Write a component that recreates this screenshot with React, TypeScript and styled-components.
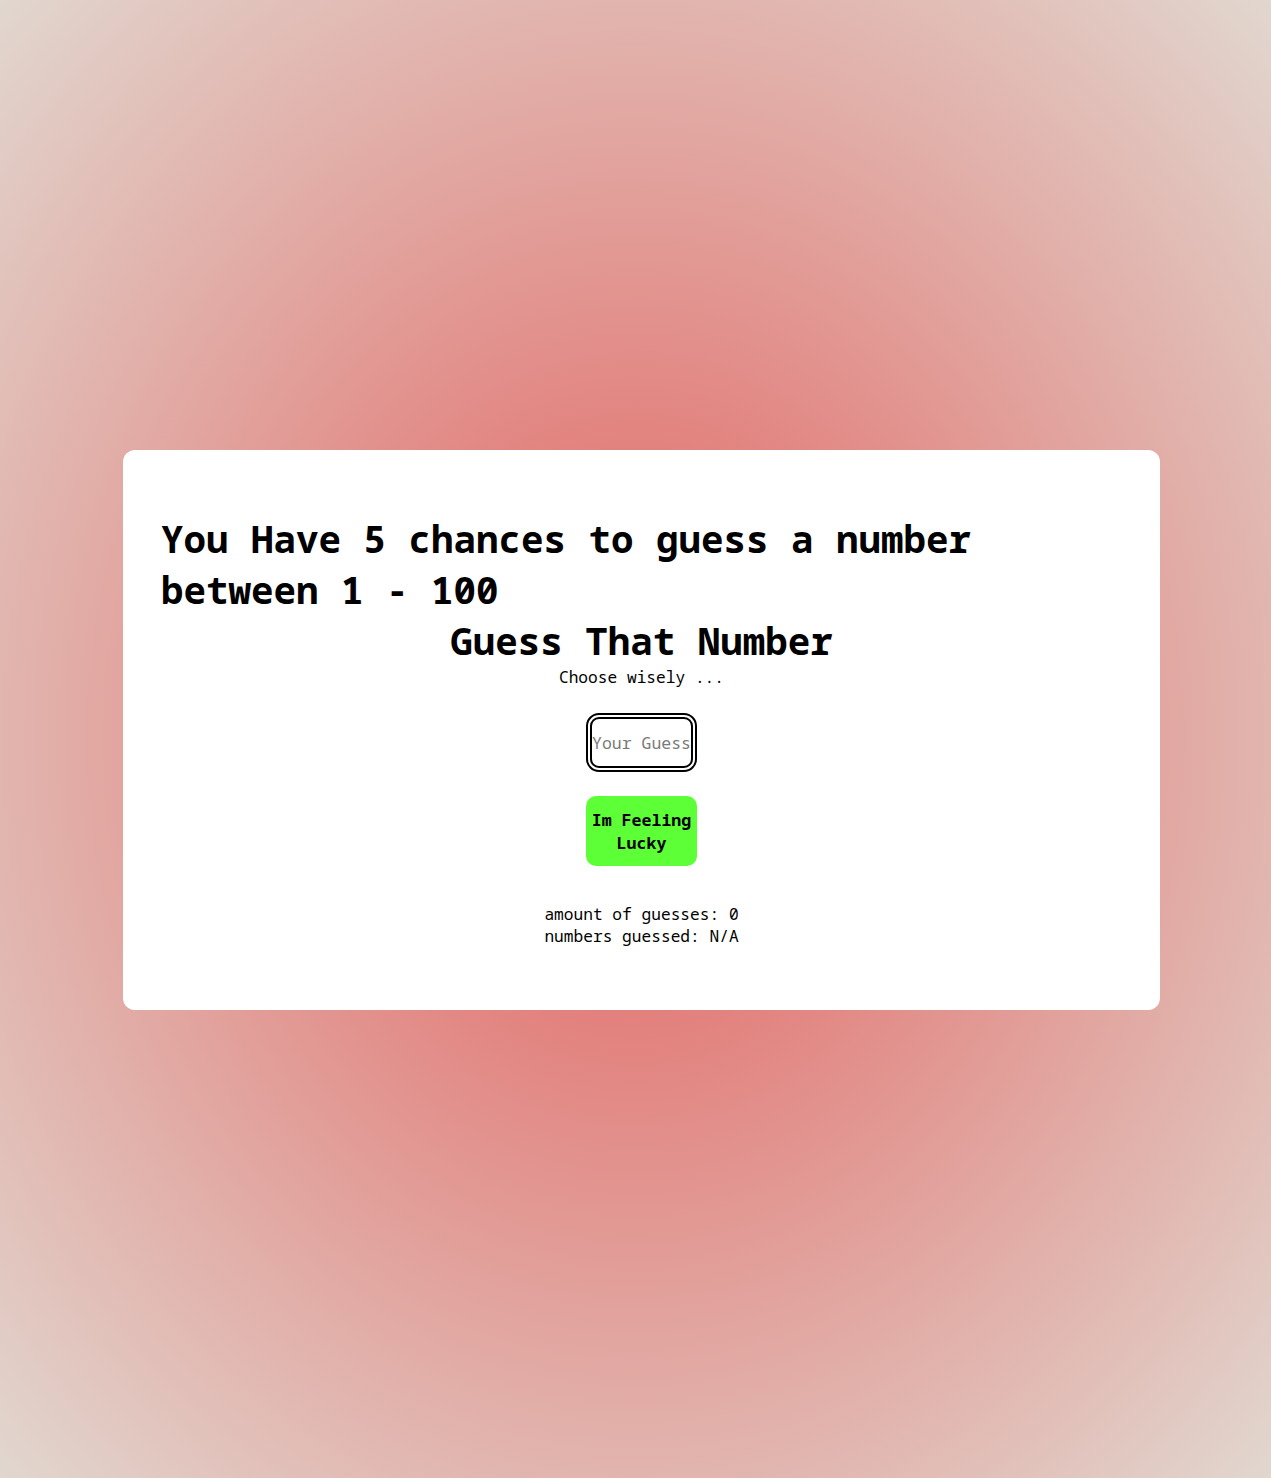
import React from "react";
import styled, { createGlobalStyle } from "styled-components";

const Global = createGlobalStyle`
  html, body { margin: 0; padding: 0; }
  body {
    min-height: 1478px;
    font-family: "Noto Sans Mono", "DejaVu Sans Mono", monospace;
    background: radial-gradient(ellipse farthest-corner at 50% 50%, rgb(227, 98, 96) 0%, rgb(225, 215, 207) 100%);
    background-attachment: fixed;
  }
`;

const Page = styled.main`
  box-sizing: border-box;
  min-height: 1478px;
  padding: 450px 111px 0 123px;
`;

const Card = styled.section`
  box-sizing: border-box;
  width: 1037px;
  height: 560px;
  background: #ffffff;
  border-radius: 12px;
  padding: 63px 38px 0 38px;
  display: flex;
  flex-direction: column;
  align-items: center;
  color: #000;
`;

const Title = styled.h1`
  align-self: stretch;
  margin: 0;
  font-size: 37.5px;
  line-height: 51px;
  font-weight: 700;
  text-align: left;
`;

const Heading = styled.h2`
  margin: 0;
  font-size: 37.5px;
  line-height: 51px;
  font-weight: 700;
  text-align: center;
`;

const Sub = styled.p`
  margin: 0;
  font-size: 16.2px;
  line-height: 22px;
`;

const Form = styled.div`
  margin-top: 25px;
  display: flex;
  flex-direction: column;
  align-items: center;
  gap: 24px;
`;

const Input = styled.input`
  box-sizing: border-box;
  width: 111px;
  height: 59px;
  border: 6px double #000;
  border-radius: 13px;
  padding: 0;
  font-family: "Noto Sans Mono", "DejaVu Sans Mono", monospace;
  font-size: 16.5px;
  background: #fff;
  outline: none;
  &::placeholder { color: #7a7a7a; }
`;

const Button = styled.button`
  box-sizing: border-box;
  width: 111px;
  height: 70px;
  border: none;
  border-radius: 10px;
  background: #5dff36;
  padding: 0 4px;
  font-family: "Noto Sans Mono", "DejaVu Sans Mono", monospace;
  font-size: 16.6px;
  line-height: 23px;
  font-weight: 700;
  color: #000;
  cursor: pointer;
`;

const Stats = styled.div`
  margin-top: 37px;
  font-size: 16.2px;
  line-height: 22px;
  text-align: center;
`;

export default function App() {
  return (
    <>
      <Global />
      <Page>
        <Card>
          <Title>You Have 5 chances to guess a number between 1 - 100</Title>
          <Heading>Guess That Number</Heading>
          <Sub>Choose wisely ...</Sub>
          <Form>
            <Input type="text" placeholder="Your Guess" />
            <Button>Im Feeling Lucky</Button>
          </Form>
          <Stats>
            <div>amount of guesses: 0</div>
            <div>numbers guessed: N/A</div>
          </Stats>
        </Card>
      </Page>
    </>
  );
}
